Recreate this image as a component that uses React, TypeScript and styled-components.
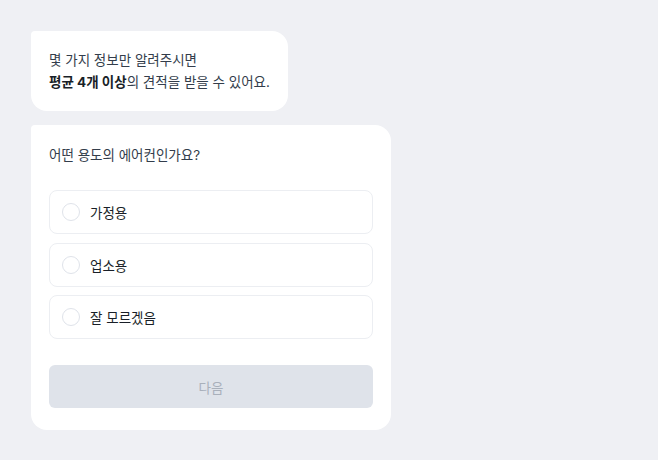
import React, { useState } from "react";
import styled, { createGlobalStyle } from "styled-components";

const Global = createGlobalStyle`
  html, body { margin: 0; padding: 0; background: #eff0f4; }
  body {
    font-family: Inter, "Noto Sans CJK KR", "Noto Sans", sans-serif;
    -webkit-font-smoothing: antialiased;
  }
`;

const Page = styled.div`
  min-height: 460px;
  box-sizing: border-box;
  padding: 31px 0 0 31px;
  display: flex;
  flex-direction: column;
  align-items: flex-start;
  gap: 14px;
  background: #eff0f4;
`;

const Bubble = styled.div`
  background: #ffffff;
  border-radius: 4px 16px 16px 16px;
  padding: 18px 18px;
  font-size: 13.5px;
  line-height: 22px;
  color: #333d4b;
`;

const Strong = styled.b`
  font-weight: 700;
  color: #191f28;
`;

const Card = styled.div`
  width: 360px;
  box-sizing: border-box;
  background: #ffffff;
  border-radius: 4px 16px 16px 16px;
  padding: 20px 18px 22px;
  display: flex;
  flex-direction: column;
`;

const Question = styled.div`
  font-size: 13.5px;
  line-height: 20px;
  color: #333d4b;
  margin-bottom: 25px;
`;

const Options = styled.div`
  display: flex;
  flex-direction: column;
  gap: 8.5px;
  margin-bottom: 26px;
`;

const Option = styled.label<{ $active: boolean }>`
  height: 44px;
  box-sizing: border-box;
  border: 1px solid ${(p) => (p.$active ? "#3182f6" : "#eceef2")};
  border-radius: 8px;
  display: flex;
  align-items: center;
  gap: 10px;
  padding-left: 12px;
  cursor: pointer;
`;

const Radio = styled.span<{ $active: boolean }>`
  width: 18px;
  height: 18px;
  box-sizing: border-box;
  border-radius: 50%;
  border: 1.5px solid ${(p) => (p.$active ? "#3182f6" : "#dfe3ea")};
  background: #fff;
`;

const Label = styled.span`
  font-size: 13.5px;
  color: #191f28;
`;

const NextButton = styled.button<{ $enabled: boolean }>`
  height: 43px;
  border: none;
  border-radius: 6px;
  background: ${(p) => (p.$enabled ? "#3182f6" : "#dfe3ea")};
  color: ${(p) => (p.$enabled ? "#fff" : "#a9b0bb")};
  font-family: inherit;
  font-size: 13.5px;
  cursor: pointer;
`;

const options = ["가정용", "업소용", "잘 모르겠음"];

export default function App() {
  const [sel, setSel] = useState<number | null>(null);
  return (
    <>
      <Global />
      <Page>
        <Bubble>
          몇 가지 정보만 알려주시면
          <br />
          <Strong>평균 4개 이상</Strong>의 견적을 받을 수 있어요.
        </Bubble>
        <Card>
          <Question>어떤 용도의 에어컨인가요?</Question>
          <Options>
            {options.map((o, i) => (
              <Option key={o} $active={sel === i} onClick={() => setSel(i)}>
                <Radio $active={sel === i} />
                <Label>{o}</Label>
              </Option>
            ))}
          </Options>
          <NextButton $enabled={sel !== null}>다음</NextButton>
        </Card>
      </Page>
    </>
  );
}
